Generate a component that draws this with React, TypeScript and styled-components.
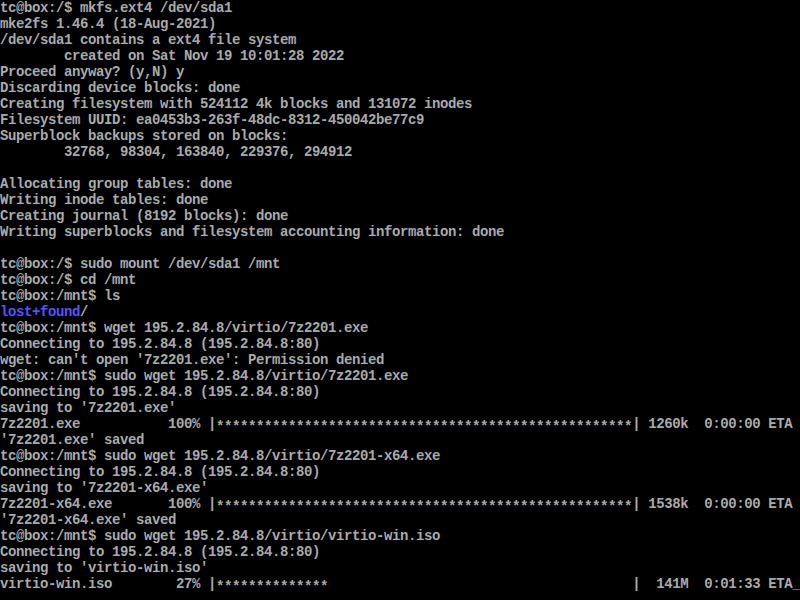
import React from "react";
import styled, { createGlobalStyle } from "styled-components";

const Global = createGlobalStyle`
  html, body { margin: 0; padding: 0; background: #000; }
`;

const Screen = styled.div`
  width: 800px;
  height: 600px;
  overflow: hidden;
  background: #000;
  color: #aaaaaa;
  font-family: "Liberation Mono", "DejaVu Sans Mono", monospace;
  font-size: 14px;
  font-weight: bold;
  letter-spacing: -0.4px;
  display: flex;
  flex-direction: column;
`;

const Line = styled.div`
  height: 16px;
  line-height: 16px;
  white-space: pre;
`;

const Dir = styled.span`
  color: #5555ff;
`;

const Stars = styled.span`
  position: relative;
  top: 3px;
`;

const Cursor = styled.span`
  color: #aaaaaa;
`;

const pad = (s: string, n: number) => s + " ".repeat(Math.max(0, n - s.length));

type Bar = { file: string; pct: string; filled: number; size: string; eta: string };

const ProgressLine = ({ file, pct, filled, size, eta, cursor }: Bar & { cursor?: boolean }) => (
  <Line>
    {pad(file, 21) + pct + " |"}
    <Stars>{"*".repeat(filled)}</Stars>
    {" ".repeat(52 - filled) + "| " + size + "  " + eta + " ETA"}
    {cursor && <Cursor>_</Cursor>}
  </Line>
);

type Item = string | { dir: string } | { bar: Bar; cursor?: boolean };

const items: Item[] = [
  "tc@box:/$ mkfs.ext4 /dev/sda1",
  "mke2fs 1.46.4 (18-Aug-2021)",
  "/dev/sda1 contains a ext4 file system",
  "        created on Sat Nov 19 10:01:28 2022",
  "Proceed anyway? (y,N) y",
  "Discarding device blocks: done",
  "Creating filesystem with 524112 4k blocks and 131072 inodes",
  "Filesystem UUID: ea0453b3-263f-48dc-8312-450042be77c9",
  "Superblock backups stored on blocks:",
  "        32768, 98304, 163840, 229376, 294912",
  "",
  "Allocating group tables: done",
  "Writing inode tables: done",
  "Creating journal (8192 blocks): done",
  "Writing superblocks and filesystem accounting information: done",
  "",
  "tc@box:/$ sudo mount /dev/sda1 /mnt",
  "tc@box:/$ cd /mnt",
  "tc@box:/mnt$ ls",
  { dir: "lost+found" },
  "tc@box:/mnt$ wget 195.2.84.8/virtio/7z2201.exe",
  "Connecting to 195.2.84.8 (195.2.84.8:80)",
  "wget: can't open '7z2201.exe': Permission denied",
  "tc@box:/mnt$ sudo wget 195.2.84.8/virtio/7z2201.exe",
  "Connecting to 195.2.84.8 (195.2.84.8:80)",
  "saving to '7z2201.exe'",
  { bar: { file: "7z2201.exe", pct: "100%", filled: 52, size: "1260k", eta: "0:00:00" } },
  "'7z2201.exe' saved",
  "tc@box:/mnt$ sudo wget 195.2.84.8/virtio/7z2201-x64.exe",
  "Connecting to 195.2.84.8 (195.2.84.8:80)",
  "saving to '7z2201-x64.exe'",
  { bar: { file: "7z2201-x64.exe", pct: "100%", filled: 52, size: "1538k", eta: "0:00:00" } },
  "'7z2201-x64.exe' saved",
  "tc@box:/mnt$ sudo wget 195.2.84.8/virtio/virtio-win.iso",
  "Connecting to 195.2.84.8 (195.2.84.8:80)",
  "saving to 'virtio-win.iso'",
  { bar: { file: "virtio-win.iso", pct: " 27%", filled: 14, size: " 141M", eta: "0:01:33" }, cursor: true },
];

export default function App() {
  return (
    <>
      <Global />
      <Screen>
        {items.map((it, i) => {
          if (typeof it === "string") return <Line key={i}>{it}</Line>;
          if ("dir" in it)
            return (
              <Line key={i}>
                <Dir>{it.dir}</Dir>/
              </Line>
            );
          return <ProgressLine key={i} {...it.bar} cursor={it.cursor} />;
        })}
      </Screen>
    </>
  );
}
